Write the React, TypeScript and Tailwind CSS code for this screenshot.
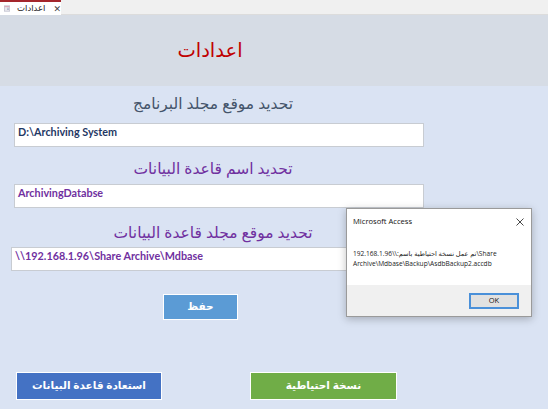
import React from "react";

const latin = { fontFamily: "Lato, 'Open Sans', 'DejaVu Sans', sans-serif" };
const ui = { fontFamily: "'Open Sans', 'DejaVu Sans', sans-serif" };

function FormIcon() {
  return (
    <svg width="9" height="9" viewBox="0 0 9 9">
      <rect x="0.5" y="0.5" width="8" height="8" fill="#e8e8ee" stroke="#b9b9c8" />
      <rect x="1" y="1" width="7" height="1.5" fill="#d9a3b5" />
      <rect x="4.5" y="3.5" width="3" height="1" fill="#9aa3c0" />
      <rect x="4.5" y="5.5" width="3" height="1" fill="#9aa3c0" />
    </svg>
  );
}

function Field({ value, color, left = 14 }: { value: string; color: string; left?: number }) {
  return (
    <div
      className={`h-[24px] w-[410px] bg-white border border-[#c8ccd2] px-[3px] pt-[1px] text-[10.8px] font-bold leading-[14px] ${color}`}
      style={{ ...latin, marginLeft: left }}
    >
      {value}
    </div>
  );
}

function Label({ text, color }: { text: string; color: string }) {
  return (
    <div dir="rtl" className={`w-[400px] ml-[13px] text-center text-[15.5px] leading-[22px] ${color}`} style={ui}>
      {text}
    </div>
  );
}

export default function App() {
  return (
    <div className="relative w-[548px] h-[409px] overflow-hidden bg-[#dae3f3]">
      {/* tab strip */}
      <div className="h-[15px] bg-[#f0f0f0] border-b border-[#dcdcdc] flex">
        <div className="w-[61px] h-[15px] bg-white border-t-2 border-[#a4262c] flex items-center pl-[4px]" style={ui}>
          <FormIcon />
          <span dir="rtl" className="ml-[7px] text-[8.5px] leading-none text-[#222]">اعدادات</span>
          <span className="ml-[8px] text-[9px] leading-none text-[#444]">✕</span>
        </div>
      </div>

      {/* header band */}
      <div className="h-[71px] bg-[#d6dce5] flex items-center">
        <div dir="rtl" className="w-[400px] ml-[10px] text-center text-[19.5px] text-[#c00000] pb-[1px]" style={ui}>
          اعدادات
        </div>
      </div>

      {/* form */}
      <div className="pt-[6px] flex flex-col">
        <Label text="تحديد موقع مجلد البرنامج" color="text-[#44546a]" />
        <div className="h-[9px]" />
        <Field value="D:\Archiving System" color="text-[#1f3864]" />
        <div className="h-[10px]" />
        <Label text="تحديد اسم قاعدة البيانات" color="text-[#7030a0]" />
        <div className="h-[5px]" />
        <Field value="ArchivingDatabse" color="text-[#7030a0]" />
        <div className="h-[13px]" />
        <Label text="تحديد موقع مجلد قاعدة البيانات" color="text-[#7030a0]" />
        <div className="h-[4px]" />
        <Field value="\\192.168.1.96\Share Archive\Mdbase" color="text-[#7030a0]" left={11} />

        <div className="mt-[23px] ml-[163px] w-[75px] h-[26px] bg-[#5b9bd5] border border-white flex items-center justify-center">
          <span dir="rtl" className="text-white text-[10.5px] font-semibold" style={ui}>حفظ</span>
        </div>

        <div className="mt-[52px] flex">
          <div className="ml-[16px] w-[146px] h-[28px] bg-[#4472c4] border border-white flex items-center justify-center">
            <span dir="rtl" className="text-white text-[10.5px] font-semibold" style={ui}>استعادة قاعدة البيانات</span>
          </div>
          <div className="ml-[88px] w-[147px] h-[28px] bg-[#70ad47] border border-white flex items-center justify-center">
            <span dir="rtl" className="text-white text-[10.5px] font-semibold" style={ui}>نسخة احتياطية</span>
          </div>
        </div>
      </div>

      {/* message box */}
      <div
        className="absolute left-[346px] top-[208px] w-[186px] h-[109px] bg-white border border-[#9a9a9a] shadow-[0_2px_8px_rgba(0,0,0,0.25)] flex flex-col"
        style={{ fontFamily: "'Open Sans', 'DejaVu Sans', sans-serif" }}
      >
        <div className="h-[26px] flex items-center justify-between pl-[6px] pr-[7px]">
          <span className="text-[7.6px] text-[#111]">Microsoft Access</span>
          <svg width="8" height="8" viewBox="0 0 8 8">
            <path d="M0.5 0.5 L7.5 7.5 M7.5 0.5 L0.5 7.5" stroke="#333" strokeWidth="0.9" />
          </svg>
        </div>
        <div className="flex-1 pl-[6px] pt-[14px] text-[6.6px] leading-[10px] text-[#222]">
          <div dir="ltr">
            <span>192.168.1.96\\</span>
            <bdi dir="rtl">تم عمل نسخة احتياطية باسم:</bdi>
            <span>\Share</span>
          </div>
          <div>Archive\Mdbase\Backup\AsdbBackup2.accdb</div>
        </div>
        <div className="h-[31px] bg-[#f0f0f0] flex items-center justify-end pr-[12px]">
          <div className="w-[50px] h-[16px] bg-[#e1e1e1] border-2 border-[#4a90d9] flex items-center justify-center text-[7.5px] text-[#111]">
            OK
          </div>
        </div>
      </div>
    </div>
  );
}
